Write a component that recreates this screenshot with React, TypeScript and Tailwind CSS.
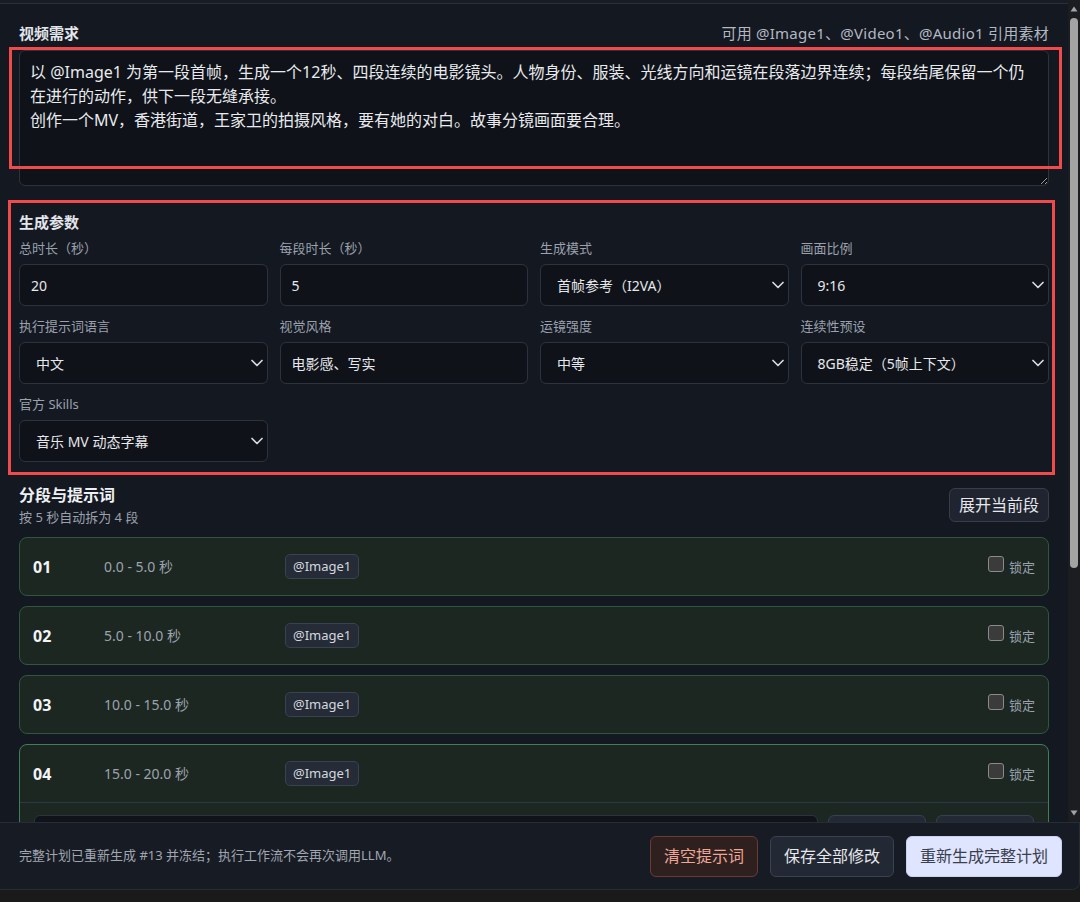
import React from "react";

const Chevron = () => (
  <svg width="12" height="8" viewBox="0 0 12 8" className="shrink-0">
    <path d="M1 1.5 L6 6.5 L11 1.5" fill="none" stroke="#d6d9de" strokeWidth="1.7" strokeLinecap="round" strokeLinejoin="round" />
  </svg>
);

function Field({ label, value, select }: { label: string; value: string; select?: boolean }) {
  return (
    <div className="flex flex-col gap-[6px]">
      <div className="text-[13px] leading-[19px] text-[#9aa1ad]">{label}</div>
      <div
        className={
          "h-[42px] rounded-[6px] border border-[#2d333e] bg-[#0f1219] flex items-center text-[14px] text-[#e6e8eb] " +
          (select ? "pl-[16px] pr-[4px] justify-between" : "pl-[11px]")
        }
      >
        <span>{value}</span>
        {select && <Chevron />}
      </div>
    </div>
  );
}

function Seg({ n, t, active }: { n: string; t: string; active?: boolean }) {
  return (
    <div
      className={
        "rounded-[8px] border bg-[#1c2721] shrink-0 " +
        (active ? "border-[#3f7f55]" : "border-[#2f573d]")
      }
    >
      <div className="h-[57px] flex items-center pl-[13px] pr-[13px]">
        <div className="w-[71px] text-[16px] font-bold text-[#f3f4f6]">{n}</div>
        <div className="w-[181px] text-[14px] text-[#9ca3af]">{t}</div>
        <span className="h-[25px] px-[7px] flex items-center rounded-[5px] border border-[#3a4252] bg-[#252b37] text-[13px] text-[#d4d8de]">
          @Image1
        </span>
        <div className="ml-auto flex items-center gap-[5px]">
          <span className="mb-[5px] w-[16px] h-[16px] rounded-[3px] border border-[#8a8a8a] bg-[#3b3b3b]" />
          <span className="mt-[2px] text-[13px] text-[#9aa1ad]">锁定</span>
        </div>
      </div>
      {active && (
        <div className="border-t border-[#2b3a47] pt-[12px] pl-[14px] pr-[14px] pb-[12px] flex gap-[10px]">
          <div className="flex-1 h-[40px] rounded-[6px] border border-[#2d333e] bg-[#10131a]" />
          <div className="w-[98px] h-[36px] rounded-[6px] border border-[#37404f] bg-[#232a36]" />
          <div className="w-[98px] h-[36px] rounded-[6px] border border-[#37404f] bg-[#232a36]" />
        </div>
      )}
    </div>
  );
}

export default function App() {
  const text =
    "以 @Image1 为第一段首帧，生成一个12秒、四段连续的电影镜头。人物身份、服装、光线方向和运镜在段落边界连续；每段结尾保留一个仍在进行的动作，供下一段无缝承接。\n创作一个MV，香港街道，王家卫的拍摄风格，要有她的对白。故事分镜画面要合理。";
  return (
    <div className="relative w-[1080px] h-[902px] overflow-hidden bg-[#1a1a1b] font-['Noto_Sans','Noto_Sans_CJK_SC',sans-serif]">
      <div className="h-[822px] flex bg-[#141821]">
        <div className="flex-1 flex flex-col overflow-hidden">
          <div className="h-[4px] shrink-0 bg-[#181c25] border-b border-[#2a2f3a]" />
          <div className="px-[19px] pt-[19px] flex flex-col">
            <div className="h-[20px] flex items-center justify-between">
              <span className="text-[15px] font-bold text-[#e2e5ea]">视频需求</span>
              <span className="text-[15px] tracking-[0.25px] text-[#b3b8c1]">可用 @Image1、@Video1、@Audio1 引用素材</span>
            </div>
            <textarea
              readOnly
              value={text}
              rows={5}
              className="mt-[7px] h-[136px] w-full resize-y rounded-[6px] border border-[#2d333e] bg-[#0f1219] px-[10px] py-[9px] text-[16px] leading-[24px] text-[#e8eaed] outline-none font-['Noto_Sans','Noto_Sans_CJK_SC',sans-serif]"
            />
            <div className="mt-[26px] h-[20px] text-[15px] leading-[20px] font-bold text-[#e2e5ea]">生成参数</div>
            <div className="mt-[7px] grid grid-cols-4 gap-x-[12px] gap-y-[11px]">
              <Field label="总时长（秒）" value="20" />
              <Field label="每段时长（秒）" value="5" />
              <Field label="生成模式" value="首帧参考（I2VA）" select />
              <Field label="画面比例" value="9:16" select />
              <Field label="执行提示词语言" value="中文" select />
              <Field label="视觉风格" value="电影感、写实" />
              <Field label="运镜强度" value="中等" select />
              <Field label="连续性预设" value="8GB稳定（5帧上下文）" select />
              <Field label="官方 Skills" value="音乐 MV 动态字幕" select />
            </div>
            <div className="mt-[22px] flex items-center justify-between">
              <div className="flex flex-col">
                <span className="text-[16px] leading-[22px] font-bold text-[#eef0f3]">分段与提示词</span>
                <span className="mt-[2px] text-[13px] leading-[18px] text-[#9aa1ad]">按 5 秒自动拆为 4 段</span>
              </div>
              <button className="h-[34px] px-[9px] rounded-[6px] border border-[#363d4b] bg-[#1f2430] text-[16px] text-[#e6e8eb]">
                展开当前段
              </button>
            </div>
            <div className="mt-[11px] flex flex-col gap-[10px]">
              <Seg n="01" t="0.0 - 5.0 秒" />
              <Seg n="02" t="5.0 - 10.0 秒" />
              <Seg n="03" t="10.0 - 15.0 秒" />
              <Seg n="04" t="15.0 - 20.0 秒" active />
            </div>
          </div>
        </div>
        <div className="w-[12px] shrink-0 bg-[#1c1d21] flex flex-col items-center">
          <div className="h-[18px] flex items-center justify-center">
            <svg width="8" height="6" viewBox="0 0 8 6"><path d="M4 0.5 L7.5 5.5 L0.5 5.5 Z" fill="#a3a3a3" /></svg>
          </div>
          <div className="w-[8px] h-[550px] rounded-full bg-[#a3a3a3]" />
          <div className="flex-1" />
          <div className="h-[18px] flex items-center justify-center">
            <svg width="8" height="6" viewBox="0 0 8 6"><path d="M0.5 0.5 L7.5 0.5 L4 5.5 Z" fill="#a3a3a3" /></svg>
          </div>
        </div>
      </div>
      <div className="h-[68px] flex items-center justify-between pl-[19px] pr-[17px] bg-[#171b24] border-t border-r border-b border-[#272c37] rounded-br-[8px]">
        <span className="text-[13px] text-[#a0a6b0]">完整计划已重新生成 #13 并冻结；执行工作流不会再次调用LLM。</span>
        <div className="flex items-center gap-[12px]">
          <button className="h-[41px] px-[13px] rounded-[6px] border border-[#6b3a33] bg-[#2e201f] text-[16px] text-[#f0a696]">清空提示词</button>
          <button className="h-[41px] px-[13px] rounded-[6px] border border-[#3a4151] bg-[#222834] text-[16px] text-[#e6e8eb]">保存全部修改</button>
          <button className="h-[41px] px-[13px] rounded-[6px] border border-[#c9d0f5] bg-[#dfe4ff] text-[16px] text-[#3a404b]">重新生成完整计划</button>
        </div>
      </div>
      <div className="absolute left-[9px] top-[47px] w-[1053px] h-[122px] border-[3px] border-[#f04a4a] pointer-events-none" />
      <div className="absolute left-[8px] top-[200px] w-[1047px] h-[275px] border-[3px] border-[#f04a4a] pointer-events-none" />
    </div>
  );
}
